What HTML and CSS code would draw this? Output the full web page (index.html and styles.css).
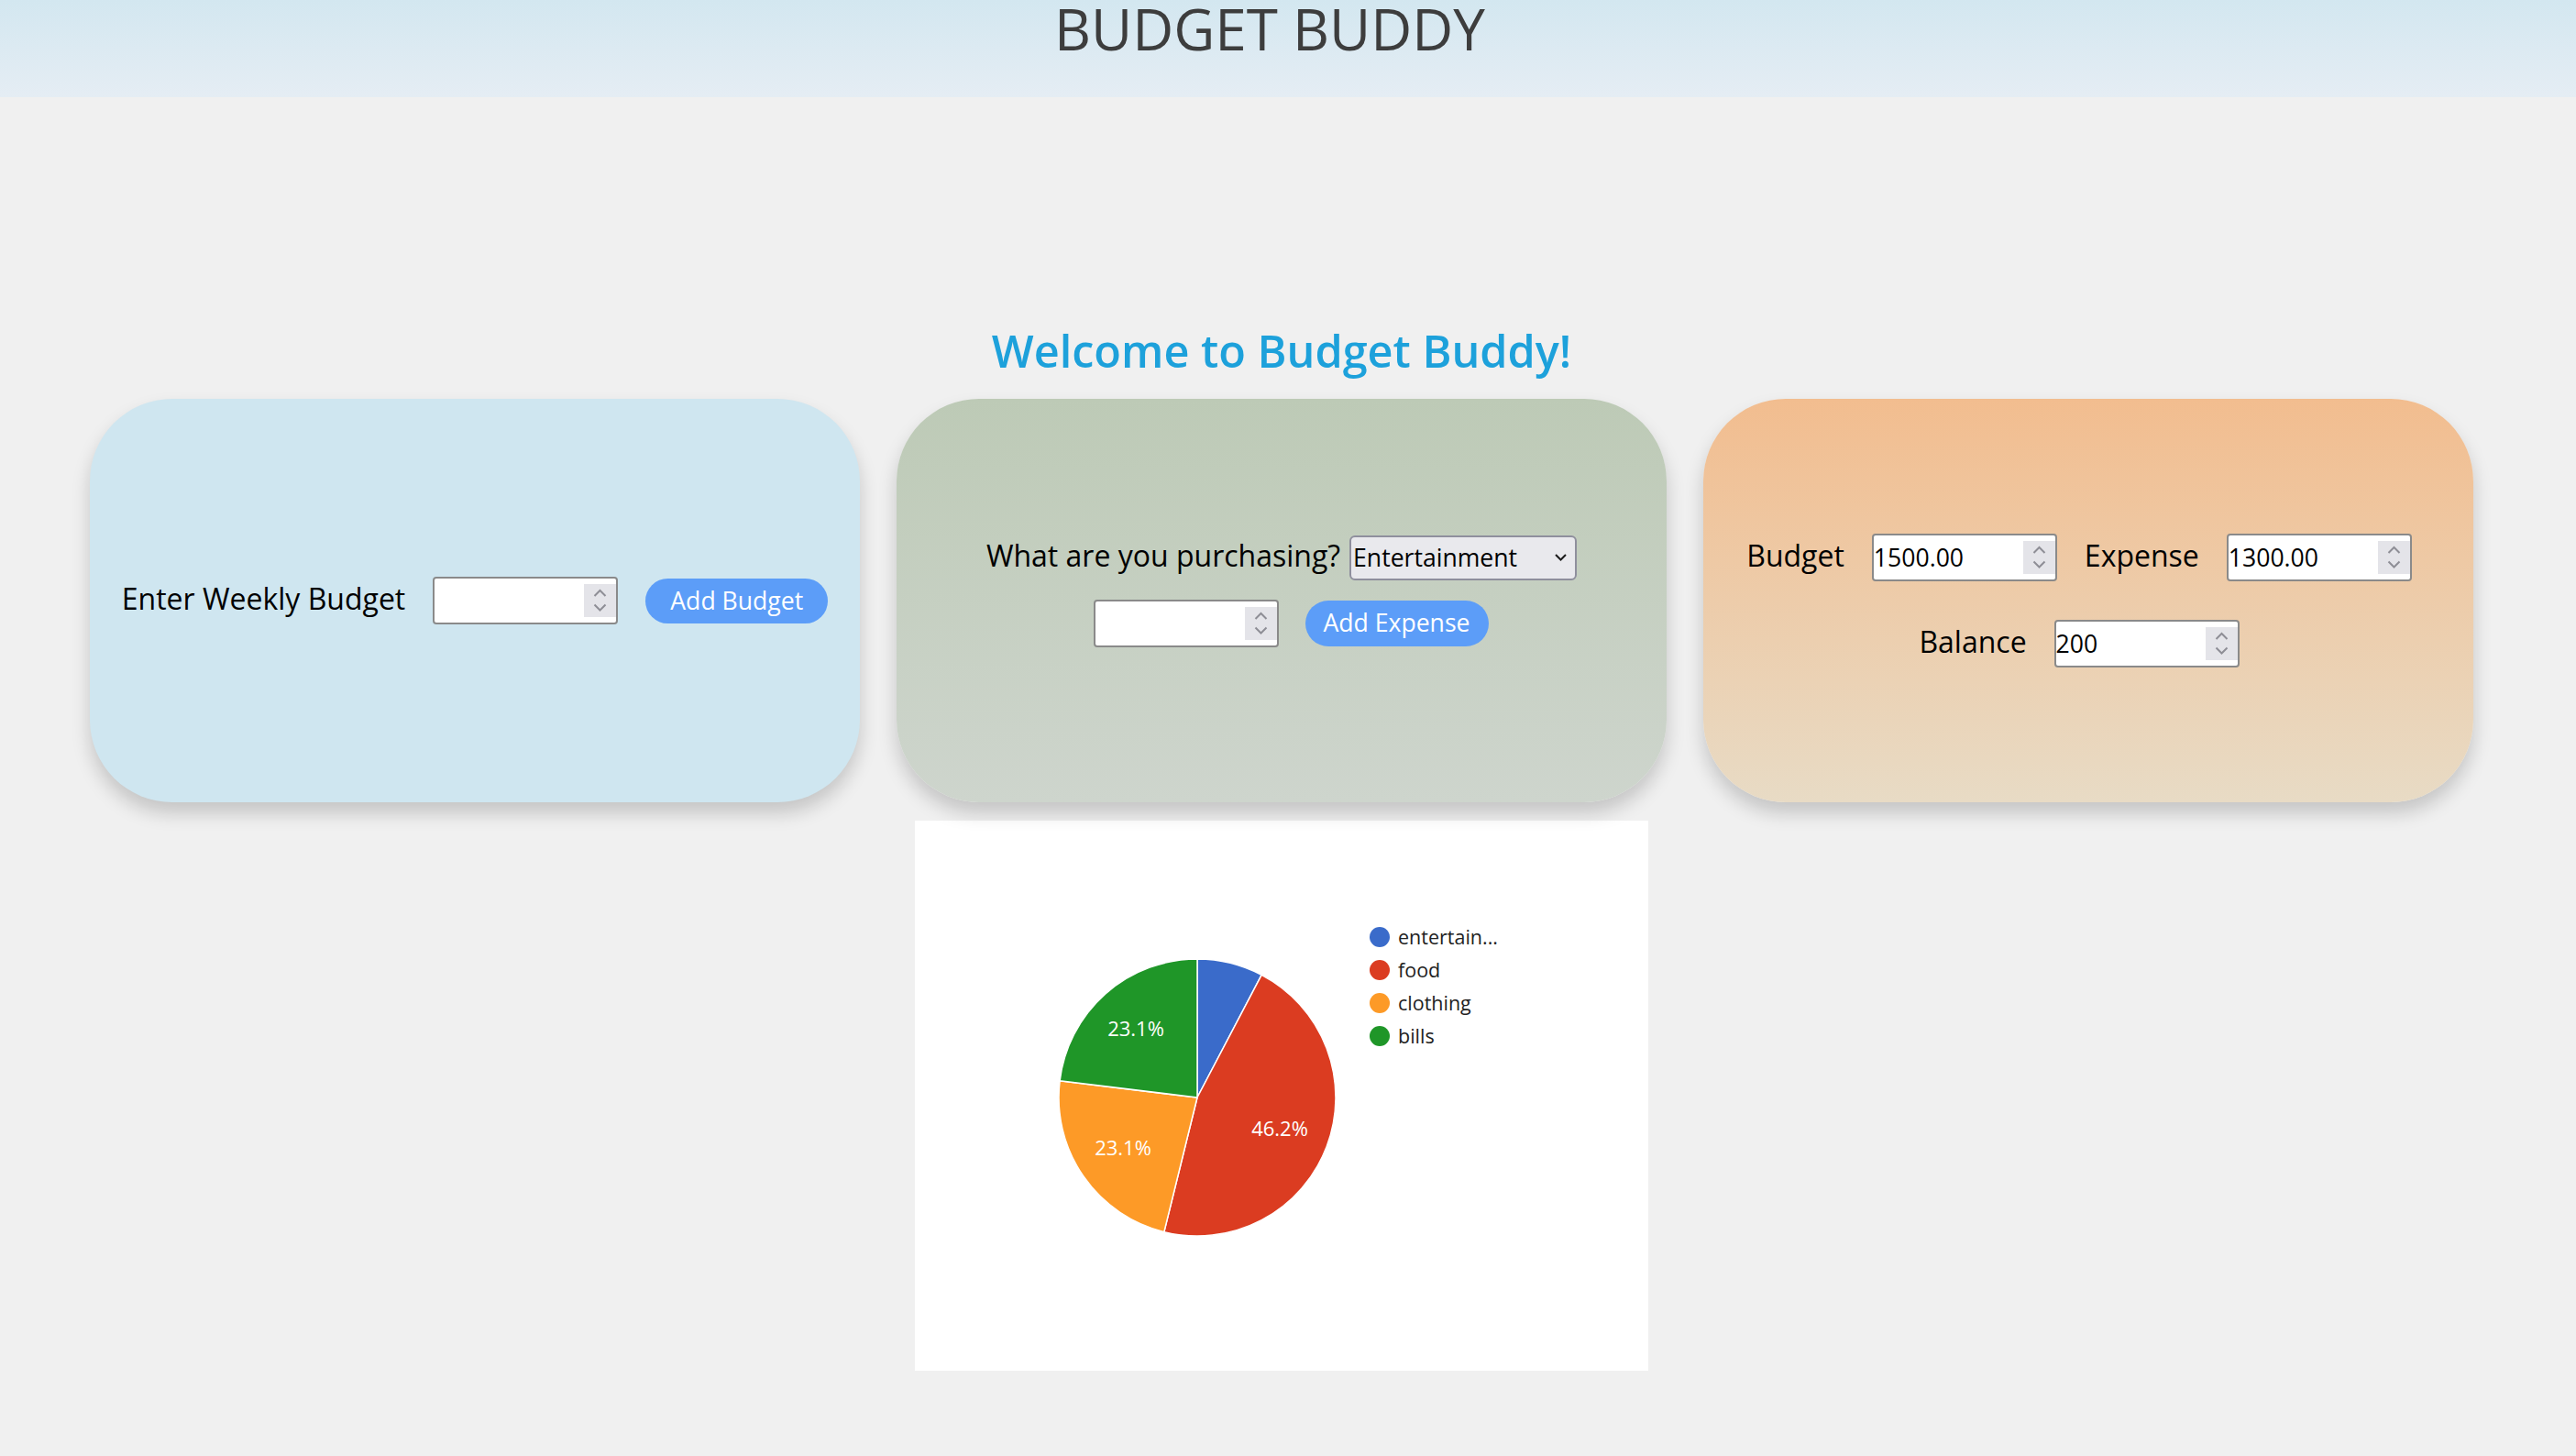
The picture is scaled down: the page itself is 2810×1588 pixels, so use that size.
FILE: index.html
```html
<!DOCTYPE html>
<html lang="en">
<head>
<meta charset="utf-8">
<title>Budget Buddy</title>
<link rel="stylesheet" href="styles.css">
</head>
<body>
<header class="topbar">
  <h1 class="brand">BUDGET BUDDY</h1>
</header>
<main class="page">
  <h2 class="welcome">Welcome to Budget Buddy!</h2>
  <section class="cards">
    <div class="card card-budget">
      <div class="row">
        <span class="label">Enter Weekly Budget</span>
        <div class="num">
          <input class="num-field" type="text" value="">
          <span class="spin"><svg width="35" height="36" viewBox="0 0 35 36"><path d="M11.5 13 L17.5 7 L23.5 13 M11.5 22.5 L17.5 28.5 L23.5 22.5" fill="none" stroke="#8e8e96" stroke-width="2"/></svg></span>
        </div>
        <button class="btn btn-budget">Add Budget</button>
      </div>
    </div>
    <div class="card card-expense">
      <div class="stack stack-expense">
        <div class="row row-tight">
          <span class="label">What are you purchasing?</span>
          <div class="select">
            <span class="select-text">Entertainment</span>
            <svg class="select-chev" width="13" height="8" viewBox="0 0 13 8"><path d="M1 1 L6.5 6.5 L12 1" fill="none" stroke="#1c1c1c" stroke-width="2"/></svg>
          </div>
        </div>
        <div class="row row-shift">
          <div class="num">
            <input class="num-field" type="text" value="">
            <span class="spin"><svg width="35" height="36" viewBox="0 0 35 36"><path d="M11.5 13 L17.5 7 L23.5 13 M11.5 22.5 L17.5 28.5 L23.5 22.5" fill="none" stroke="#8e8e96" stroke-width="2"/></svg></span>
          </div>
          <button class="btn btn-expense">Add Expense</button>
        </div>
      </div>
    </div>
    <div class="card card-summary">
      <div class="stack stack-summary">
        <div class="row">
          <span class="label">Budget</span>
          <div class="num">
            <input class="num-field" type="text" value="1500.00">
            <span class="spin"><svg width="35" height="36" viewBox="0 0 35 36"><path d="M11.5 13 L17.5 7 L23.5 13 M11.5 22.5 L17.5 28.5 L23.5 22.5" fill="none" stroke="#8e8e96" stroke-width="2"/></svg></span>
          </div>
          <span class="label">Expense</span>
          <div class="num">
            <input class="num-field" type="text" value="1300.00">
            <span class="spin"><svg width="35" height="36" viewBox="0 0 35 36"><path d="M11.5 13 L17.5 7 L23.5 13 M11.5 22.5 L17.5 28.5 L23.5 22.5" fill="none" stroke="#8e8e96" stroke-width="2"/></svg></span>
          </div>
        </div>
        <div class="row">
          <span class="label">Balance</span>
          <div class="num">
            <input class="num-field" type="text" value="200">
            <span class="spin"><svg width="35" height="36" viewBox="0 0 35 36"><path d="M11.5 13 L17.5 7 L23.5 13 M11.5 22.5 L17.5 28.5 L23.5 22.5" fill="none" stroke="#8e8e96" stroke-width="2"/></svg></span>
          </div>
        </div>
      </div>
    </div>
  </section>
  <section class="chart">
    <svg class="chart-svg" width="800" height="600" viewBox="0 0 800 600">
      <g stroke="#ffffff" stroke-width="1.5">
        <path d="M308 302 L308 151 A151 151 0 0 1 378.17 168.29 Z" fill="#3a6bca"/>
        <path d="M308 302 L378.17 168.29 A151 151 0 0 1 271.86 448.61 Z" fill="#db3c21"/>
        <path d="M308 302 L271.86 448.61 A151 151 0 0 1 158.10 283.80 Z" fill="#fd9a27"/>
        <path d="M308 302 L158.10 283.80 A151 151 0 0 1 308 151 Z" fill="#1f9628"/>
      </g>
      <g class="pct" fill="#ffffff" text-anchor="middle">
        <text x="241" y="235">23.1%</text>
        <text x="398" y="344">46.2%</text>
        <text x="227" y="365">23.1%</text>
      </g>
      <g class="legend">
        <circle cx="507" cy="127" r="11" fill="#3a6bca"/>
        <circle cx="507" cy="163" r="11" fill="#db3c21"/>
        <circle cx="507" cy="199" r="11" fill="#fd9a27"/>
        <circle cx="507" cy="235" r="11" fill="#1f9628"/>
        <text x="527" y="135">entertain...</text>
        <text x="527" y="171">food</text>
        <text x="527" y="207">clothing</text>
        <text x="527" y="243">bills</text>
      </g>
    </svg>
  </section>
</main>
</body>
</html>
```

FILE: styles.css
```css
html, body {
  margin: 0;
  padding: 0;
}

body {
  background: #f0f0f0;
  font-family: "Open Sans", "Liberation Sans", sans-serif;
  color: #000;
}

.topbar {
  height: 106px;
  background: linear-gradient(to bottom, #d3e7f0, #e5edf4);
  text-align: center;
  padding-right: 40px;
}

.brand {
  margin: 0;
  font-size: 62px;
  line-height: 62px;
  font-weight: 400;
  color: #3d3d3d;
}

.page {
  width: 2796px;
  text-align: center;
}

.welcome {
  margin: 243px 0 0;
  font-size: 48.6px;
  font-weight: 600;
  line-height: 66px;
  color: #1da1db;
  height: 86px;
}

.cards {
  display: flex;
  justify-content: center;
  gap: 40px;
}

.card {
  width: 840px;
  height: 440px;
  border-radius: 90px;
  box-shadow: 0 12px 20px rgba(0, 0, 0, 0.18);
  display: flex;
  align-items: center;
  justify-content: center;
  box-sizing: border-box;
}

.card-budget {
  background: #cfe6f0;
}

.card-expense {
  background: linear-gradient(to bottom, #bdcab6, #ced5cd);
  padding-bottom: 21px;
}

.card-summary {
  background: linear-gradient(to bottom, #f2bd8f, #e8dbc5);
  padding-right: 20px;
}

.row {
  display: flex;
  align-items: center;
  justify-content: center;
  gap: 30px;
}

.row-tight {
  gap: 10px;
}

.row-shift {
  padding-left: 20px;
  gap: 29px;
}

.stack {
  display: flex;
  flex-direction: column;
  align-items: center;
}

.stack-expense {
  gap: 21px;
}

.stack-summary {
  gap: 42px;
}

.label {
  font-size: 32px;
  line-height: 40px;
  color: #000;
  padding-bottom: 4px;
}

.num {
  width: 202px;
  height: 52px;
  box-sizing: border-box;
  border: 2px solid #8a8a8a;
  border-radius: 4px;
  background: #ffffff;
  display: flex;
  align-items: center;
}

.num-field {
  flex: 1;
  min-width: 0;
  border: none;
  outline: none;
  background: transparent;
  padding: 0;
  margin: 0;
  font-family: "Open Sans", "Liberation Sans", sans-serif;
  font-size: 26.6px;
  color: #000;
  height: 40px;
}

.spin {
  width: 35px;
  height: 36px;
  background: #e4e4e9;
  display: flex;
}

.btn {
  border: none;
  border-radius: 25px;
  background: #5c9df8;
  color: #ffffff;
  font-family: "Open Sans", "Liberation Sans", sans-serif;
  font-size: 26.6px;
  height: 49px;
  padding: 0;
  line-height: 49px;
  text-align: center;
}

.btn-budget {
  width: 199px;
}

.btn-expense {
  width: 200px;
  height: 50px;
}

.select {
  width: 248px;
  height: 49px;
  box-sizing: border-box;
  border: 2px solid #8f8f9d;
  border-radius: 6px;
  background: #e9e9ed;
  display: flex;
  align-items: center;
  padding: 0 9px 0 2px;
  font-size: 26.6px;
  color: #000;
}

.select-chev {
  margin-left: auto;
}

.chart {
  width: 800px;
  height: 600px;
  margin: 20px auto 0;
  background: #ffffff;
}

.chart-svg {
  display: block;
  font-family: "Open Sans", "Liberation Sans", sans-serif;
}

.pct text {
  font-size: 22px;
}

.legend text {
  font-size: 21.5px;
  fill: #222222;
}
```
